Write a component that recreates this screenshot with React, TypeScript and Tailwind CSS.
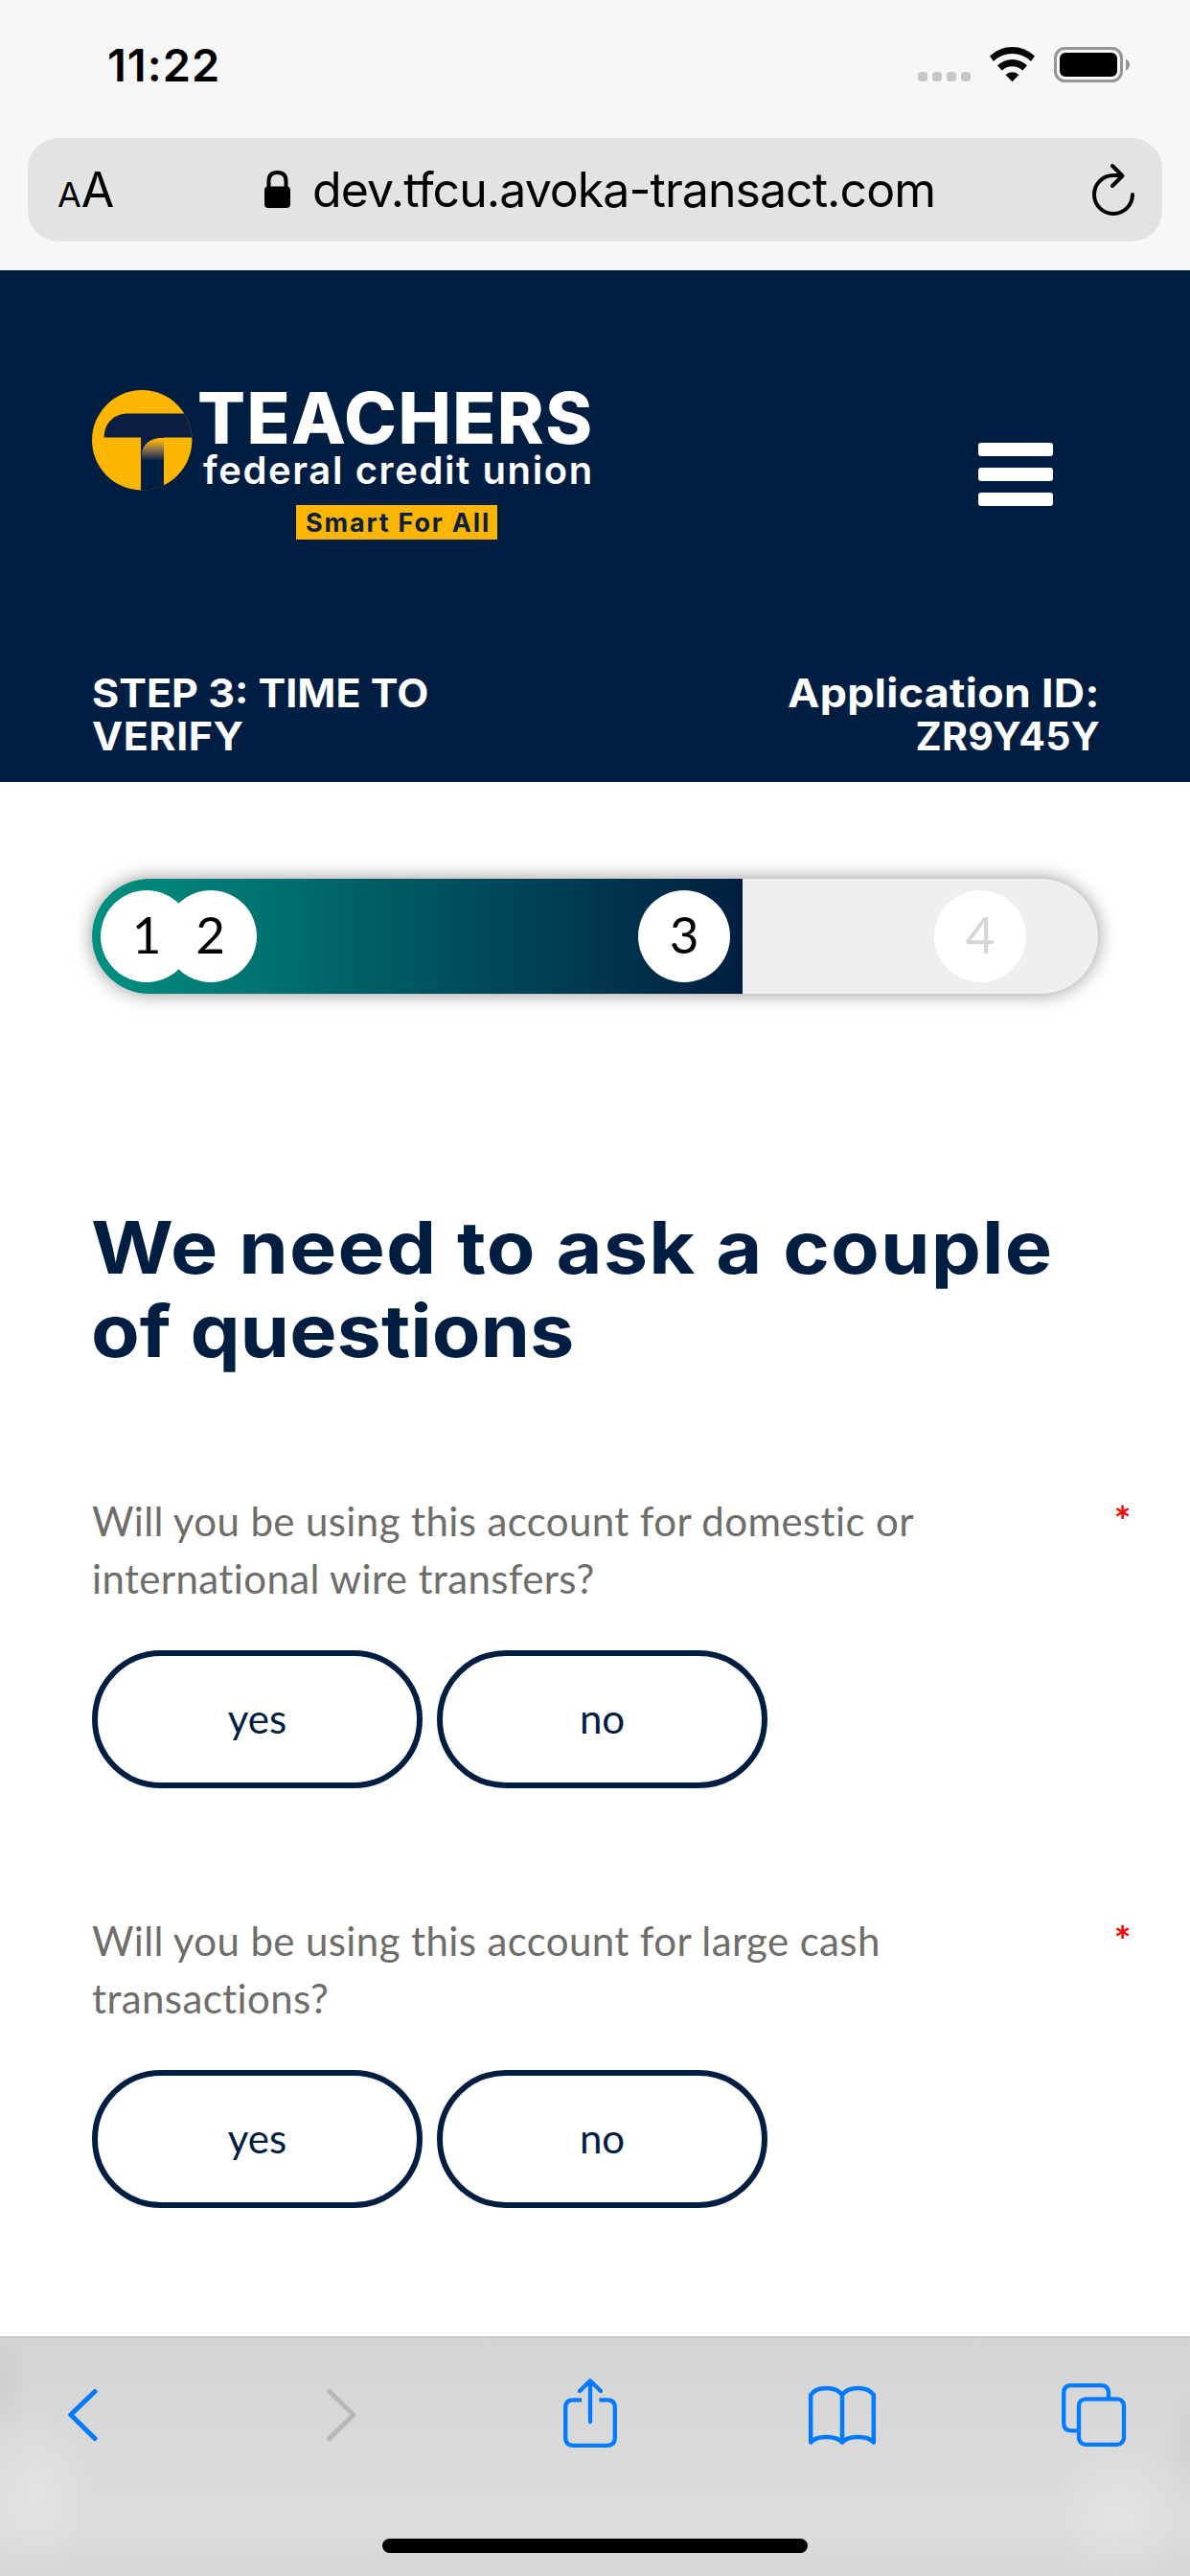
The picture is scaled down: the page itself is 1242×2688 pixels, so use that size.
import type { ReactNode } from "react";

function StatusBar() {
  return (
    <div className="flex h-[144px] items-start justify-between pl-[112px] pr-[63px]">
      <span className="mt-[44px] text-[47px] leading-[48px] font-semibold tracking-[1px] text-black">11:22</span>
      <div className="mt-[47px] flex items-start">
        <div className="mt-[28px] flex gap-[5px]">
          {[0, 1, 2, 3].map((i) => (
            <span key={i} className="h-[10px] w-[10px] rounded-[3.5px] bg-[#c7c7c7]" />
          ))}
        </div>
        <svg className="ml-[18px]" width="52" height="40" viewBox="1030 47 52 40">
          <path d="M1032 58.5 A34 34 0 0 1 1079 58.5 L1075 64 A27.5 27.5 0 0 0 1036 64 Z" fill="#000" />
          <path d="M1040 68.3 A22.5 22.5 0 0 1 1071 68.3 L1066.3 73.6 A15.5 15.5 0 0 0 1044.7 73.6 Z" fill="#000" />
          <path d="M1048.5 78 A10.5 10.5 0 0 1 1062.5 78 L1055.5 85.3 Z" fill="#000" />
        </svg>
        <svg className="ml-[15px]" width="81" height="41" viewBox="1097 47 81 41">
          <rect x="1100.5" y="50.5" width="69" height="34" rx="10" fill="none" stroke="#959595" strokeWidth="3" />
          <rect x="1105" y="55" width="60" height="25" rx="6" fill="#000" />
          <path d="M1174 61.5 Q1178 63.5 1178 67.5 Q1178 71.5 1174 73.5 Z" fill="#959595" />
        </svg>
      </div>
    </div>
  );
}

function AddressBar() {
  return (
    <div className="mx-[29px] mb-[30px] flex h-[108px] items-center rounded-[32px] bg-[#e2e4e3]">
      <div className="ml-[31px] flex w-[60px] items-baseline text-black">
        <span className="text-[36px] leading-none">A</span>
        <span className="text-[50px] leading-none">A</span>
      </div>
      <svg className="ml-[155px]" width="29" height="42" viewBox="275 177 29 42">
        <path d="M280.500 197 V189 Q280.500 180 289.500 180 Q298.500 180 298.500 189 V197" fill="none" stroke="#000" strokeWidth="4" />
        <rect x="276" y="194.500" width="27" height="22.500" rx="4" fill="#000" />
      </svg>
      <span className="ml-[22px] text-[50px] leading-[60px] tracking-[-0.95px] whitespace-nowrap text-black [font-feature-settings:'calt'_0] [font-variant-ligatures:none]">
        dev.tfcu.avoka-transact.com
      </span>
      <svg className="mr-[27px] ml-auto" width="48" height="58" viewBox="1138 169 48 58">
        <g fill="none" stroke="#000" strokeWidth="4" strokeLinecap="round" strokeLinejoin="round">
          <path d="M1182 203 A20 20 0 1 1 1162 183 H1170" />
          <path d="M1161 173 L1171.500 183.500 L1161 194" />
        </g>
      </svg>
    </div>
  );
}

function Logo() {
  return (
    <div className="flex items-start text-white">
      <svg width="105" height="105" viewBox="96 407 105 105">
        <defs>
          <clipPath id="disc"><circle cx="148.200" cy="459.300" r="52.200" /></clipPath>
          <linearGradient id="stem" x1="0" y1="459" x2="0" y2="481" gradientUnits="userSpaceOnUse">
            <stop offset="0" stopColor="#fdb600" />
            <stop offset="0.45" stopColor="#8e7350" />
            <stop offset="1" stopColor="#001e41" />
          </linearGradient>
        </defs>
        <g clipPath="url(#disc)">
          <rect x="96" y="407" width="105" height="105" fill="#fdb600" />
          <path d="M108.500 456.500 C109 441 119 431.500 134 431.500 H201 V456.500 H147 Z" fill="#0c1e42" />
          <path d="M147 456 H171 V512 H147 Z" fill="#0c1e42" />
          <path d="M148 472 Q151 459 166 457 H171 V512 H148 Z" fill="url(#stem)" />
        </g>
      </svg>
      <div className="ml-[5px] flex flex-col">
        <span className="-mt-[2px] text-[74px] leading-[62px] font-extrabold tracking-[1.4px] whitespace-nowrap">TEACHERS</span>
        <span className="mt-[4px] ml-[6px] text-[40px] leading-[40px] font-semibold tracking-[1.6px] whitespace-nowrap">
          federal credit union
        </span>
        <span className="mt-[16px] ml-[103px] h-[36px] w-[210px] bg-[#fdb600] pl-[10px] text-[27px] leading-[38px] font-bold tracking-[1.8px] whitespace-nowrap text-[#0c1e42]">
          Smart For All
        </span>
      </div>
    </div>
  );
}

function Header() {
  return (
    <header className="flex h-[534px] flex-col bg-[#001e41] pt-[125px]">
      <div className="flex items-start justify-between pr-[143px] pl-[96px]">
        <Logo />
        <div className="mt-[55px] flex w-[78px] flex-col gap-[12.500px]">
          <span className="h-[13.500px] rounded-[3px] bg-white" />
          <span className="h-[13.500px] rounded-[3px] bg-white" />
          <span className="h-[13.500px] rounded-[3px] bg-white" />
        </div>
      </div>
      <div className="mt-auto flex justify-between pr-[94px] pb-[25px] pl-[96px] text-[41px] leading-[45px] font-bold text-white">
        <div className="flex flex-col items-start whitespace-nowrap">
          <span className="origin-left scale-x-[1.05]">STEP 3: TIME TO</span>
          <span className="origin-left scale-x-[1.05] tracking-[0.5px]">VERIFY</span>
        </div>
        <div className="flex flex-col items-end whitespace-nowrap">
          <span className="origin-right scale-x-[1.09] tracking-[0.3px]">Application ID:</span>
          <span className="tracking-[0.3px]">ZR9Y45Y</span>
        </div>
      </div>
    </header>
  );
}

function Step({ className, children }: { className: string; children: ReactNode }) {
  return (
    <span
      className={`absolute top-[12px] flex h-[96px] w-[96px] items-center justify-center rounded-full bg-white pb-[5px] font-[Lato,sans-serif] text-[53px] leading-none ${className}`}
    >
      {children}
    </span>
  );
}

function Progress() {
  return (
    <div className="relative mx-[96px] h-[120px] rounded-full bg-[#efefef] shadow-[0_0_20px_rgba(0,0,0,0.42)]">
      <div className="h-full w-[679px] rounded-l-full rounded-r-[3px] bg-linear-to-r from-[#009180] to-[#001e41]" />
      <Step className="left-[9px] text-black">1</Step>
      <Step className="left-[75.500px] text-black">2</Step>
      <Step className="left-[570px] text-black">3</Step>
      <Step className="left-[879px] text-[#d6d6d6]">4</Step>
    </div>
  );
}

function Choice({ label }: { label: string }) {
  return (
    <button className="h-[144px] w-[345px] rounded-full border-[6px] border-[#001e41] pb-[2px] text-[42px] leading-[50px] text-[#001e41]">
      {label}
    </button>
  );
}

function Question({ lines }: { lines: string[] }) {
  return (
    <section className="flex h-[438px] flex-col font-[Lato,sans-serif] [font-variant-ligatures:none]">
      <div className="flex justify-between pt-px pr-[61px] pl-[96px] text-[42px] leading-[60px] tracking-[0.38px]">
        <p className="text-[#6f6d6a]">
          {lines.map((line) => (
            <span key={line} className="block whitespace-nowrap">{line}</span>
          ))}
        </p>
        <span className="font-bold text-[#ff0000]">*</span>
      </div>
      <div className="mt-[45px] flex gap-[15px] pl-[96px]">
        <Choice label="yes" />
        <Choice label="no" />
      </div>
    </section>
  );
}

function Toolbar() {
  return (
    <footer className="h-[250px] shrink-0 border-t border-[#b2b2b2] bg-[radial-gradient(60px_90px_at_3%_65%,rgba(255,255,255,0.22),transparent),radial-gradient(70px_80px_at_94%_75%,rgba(255,255,255,0.22),transparent),radial-gradient(30px_60px_at_0%_20%,rgba(0,0,0,0.04),transparent),radial-gradient(30px_60px_at_100%_45%,rgba(0,0,0,0.04),transparent),linear-gradient(#d4d4d4,#dadada_50%,#dcdcdc_80%,#d6d6d6)]">
      <div className="flex pt-[39px] pl-[64px]">
        <svg width="44" height="80" viewBox="64 2478 44 80" fill="none" stroke="#007aff" strokeWidth="5" strokeLinecap="round" strokeLinejoin="round">
          <path d="M99 2495.500 L73.800 2519.700 L99 2544.500" />
        </svg>
        <svg className="ml-[226px]" width="44" height="80" viewBox="334 2478 44 80" fill="none" stroke="#b8b8b8" strokeWidth="5" strokeLinecap="round" strokeLinejoin="round">
          <path d="M343.800 2495.500 L369 2519.700 L343.800 2544.500" />
        </svg>
        <svg className="ml-[206px]" width="64" height="80" viewBox="584 2478 64 80" fill="none" stroke="#007aff" strokeWidth="4.300">
          <path d="M607 2504.300 H598 Q590.200 2504.300 590.200 2512 V2544 Q590.200 2551.800 598 2551.800 H634 Q641.800 2551.800 641.800 2544 V2512 Q641.800 2504.300 634 2504.300 H625.500" />
          <path d="M616 2527 V2484.500 M605 2495 L616 2484.300 L627 2495" strokeLinecap="round" strokeLinejoin="round" />
        </svg>
        <svg className="ml-[192px]" width="78" height="80" viewBox="840 2478 78 80" fill="none" stroke="#007aff" strokeWidth="4.500" strokeLinecap="round" strokeLinejoin="round">
          <path d="M879 2499 C873 2489.500 852 2489.500 846.200 2499 V2548.500 C852 2541 873 2541 879 2548.500 C885 2541 906 2541 911.800 2548.500 V2499 C906 2489.500 885 2489.500 879 2499 V2548.500" />
        </svg>
        <svg className="ml-[186px]" width="76" height="80" viewBox="1104 2478 76 80" fill="none" stroke="#007aff" strokeWidth="4.300">
          <path d="M1124 2536.300 H1118 Q1110.200 2536.300 1110.200 2528.500 V2497 Q1110.200 2489.200 1118 2489.200 H1149 Q1157 2489.200 1157 2497 V2503" />
          <rect x="1126" y="2503.300" width="47" height="47.500" rx="7" />
        </svg>
      </div>
      <div className="mx-auto mt-[91px] h-[15px] w-[444px] rounded-full bg-black" />
    </footer>
  );
}

export default function App() {
  return (
    <div className="flex h-[2688px] w-[1242px] flex-col overflow-hidden bg-white font-[Inter,sans-serif]">
      <div className="bg-[#f7f7f7]">
        <StatusBar />
        <AddressBar />
      </div>
      <Header />
      <main className="flex grow flex-col pt-[101px]">
        <Progress />
        <h1 className="mt-[221px] ml-[95px] flex origin-left scale-x-[1.09] flex-col text-[76px] leading-[87px] font-bold whitespace-nowrap text-[#001e41]">
          <span className="tracking-[1.05px]">We need to ask a couple</span>
          <span>of questions</span>
        </h1>
        <div className="mt-[124px] flex flex-col">
          <Question lines={["Will you be using this account for domestic or", "international wire transfers?"]} />
          <Question lines={["Will you be using this account for large cash", "transactions?"]} />
        </div>
      </main>
      <Toolbar />
    </div>
  );
}
